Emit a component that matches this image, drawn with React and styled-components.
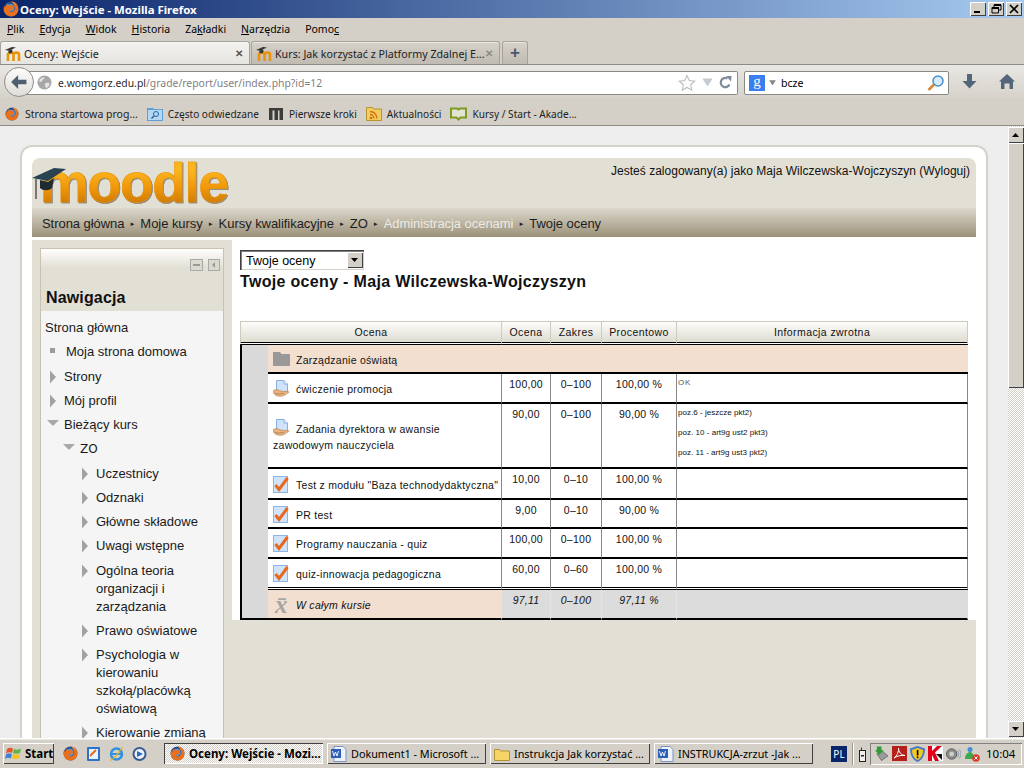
import React from "react";
import styled, { createGlobalStyle } from "styled-components";

const Global = createGlobalStyle`
  html, body { margin: 0; padding: 0; background: #d4d0c8; }
  * { box-sizing: border-box; }
`;
const ui = `"Noto Sans", "DejaVu Sans", sans-serif`;
const web = `"Liberation Sans", Arial, sans-serif`;

const Root = styled.div`
  width: 1024px; height: 768px; overflow: hidden; display: flex; flex-direction: column;
  background: #d4d0c8; font-family: ${ui}; color: #000;
`;
const TitleBar = styled.div`
  height: 18px; flex: none; display: flex; align-items: center; padding: 0 2px 0 3px;
  background: linear-gradient(90deg, #0a246a 0%, #a6caf0 100%);
  color: #fff; font: bold 11.4px ${ui}; gap: 1px;
`;
const TitleText = styled.span`flex: 1;`;
const WinBtns = styled.div`display: flex; gap: 2px;`;
const WinBtn = styled.div`
  width: 16px; height: 14px; background: #d4d0c8; display: flex; align-items: center; justify-content: center;
  box-shadow: inset 1px 1px 0 #fff, inset -1px -1px 0 #404040;
`;
const MenuBar = styled.div`
  height: 22px; flex: none; display: flex; align-items: center; gap: 15px; padding-left: 7px; font-size: 10.5px;
`;
const MenuItem = styled.span`u { text-decoration: underline; }`;
const TabStrip = styled.div`
  height: 24px; flex: none; display: flex; align-items: flex-end; gap: 1px; padding-top: 1px; font-size: 10.7px;
`;
const Tab = styled.div`
  width: ${p => p.$w}px; height: 23px; display: flex; align-items: center; padding: 1px 6px 0 4px; gap: 2px;
  border: 1px solid #a5a29b; border-bottom: 0; border-radius: 3px 3px 0 0;
  background: ${p => p.$active ? "linear-gradient(#f3f2ef, #e6e4df)" : "linear-gradient(#d6d2ca, #bfbbb2)"};
  box-shadow: inset 0 1px 0 rgba(255,255,255,.5);
`;
const TabLabel = styled.span`flex: 1; min-width: 0; white-space: nowrap; color: #222;`;
const TabClose = styled.span`font: bold 10px ${web}; color: ${p => p.$dim ? "#8c8a84" : "#55534e"};`;
const NewTab = styled(Tab)`justify-content: center; padding: 0; font: bold 17px ${web}; color: #4a5a6c; margin-left: 1px;`;
const NavBar = styled.div`
  height: 34px; flex: none; border-top: 1px solid #8d8b85; display: flex; align-items: center;
  background: linear-gradient(#e9e7e3, #d6d2cb); padding: 0 0 0 4px; font-size: 11px;
`;
const BackBtn = styled.div`
  width: 30px; height: 30px; border-radius: 50%; flex: none; z-index: 1; margin-top: 1px;
  background: linear-gradient(#fcfcfb, #dfddd9); border: 1px solid #8f8e8a;
  display: flex; align-items: center; justify-content: center;
`;
const UrlBox = styled.div`
  width: 712px; height: 24px; margin-left: -8px; margin-top: 2px; background: #fff; border: 1px solid #8a8984; border-left: 0;
  border-radius: 0 2px 2px 0; display: flex; align-items: center; padding: 0 5px 0 11px; gap: 6px;
`;
const UrlText = styled.span`flex: 1; color: #808080; font-size: 10.4px; b { font-weight: normal; color: #2c2c2c; }`;
const SearchBox = styled.div`
  width: 205px; height: 24px; margin-left: 6px; margin-top: 2px; background: #fff; border: 1px solid #8a8984; border-radius: 2px;
  display: flex; align-items: center; padding: 0 3px 0 4px; gap: 4px;
`;
const GoogleBadge = styled.span`
  width: 16px; height: 16px; background: #3a7eef; color: #fff; font: 15px/13px "Liberation Serif", serif; text-align: center;
`;
const SearchText = styled.span`flex: 1; font-size: 10.6px; margin-left: 1px;`;
const ToolIcon = styled.span`display: flex; margin-left: ${p => p.$ml}px;`;
const BookmarkBar = styled.div`
  height: 28px; flex: none; display: flex; align-items: center; gap: 9px; padding: 4px 0 0 5px; font-size: 10.1px;
  border-bottom: 1px solid #8d8b85; color: #222;
`;
const Bookmark = styled.span`
  display: flex; align-items: center; gap: ${p => p.$gap || 5}px; white-space: nowrap; font-size: ${p => p.$fs ? `${p.$fs}px` : "inherit"};
`;

const PageRow = styled.div`flex: 1; min-height: 0; display: flex; overflow: hidden;`;
const Viewport = styled.div`flex: 1; min-width: 0; background: #eeeeee; overflow: hidden; padding: 19px 20px 0;`;
const Card = styled.div`
  width: 968px; height: 640px; background: #fff; border: 2px solid #d5d2c8; border-bottom: 0; border-radius: 12px 12px 0 0;
  padding: 11px 10px 0; font-family: ${web};
`;
const Header = styled.div`
  height: 50px; background: #e2dfd4; border-radius: 8px 8px 0 0; display: flex; justify-content: space-between;
`;
const LogoWrap = styled.div`position: relative; padding: 0 0 0 8px; width: 210px; height: 50px;`;
const LogoText = styled.span`
  display: block; font: bold 55px/50px ${web}; letter-spacing: -1.3px;
  background: linear-gradient(#fbb61e 25%, #f0960a 60%, #c47404 100%);
  -webkit-background-clip: text; background-clip: text; color: transparent;
  -webkit-text-stroke: 0.5px #e8920c;
  filter: drop-shadow(1px 1px 0 #8e8a7c);
`;
const Cap = styled.svg`position: absolute; left: 0; top: 9px;`;
const LoginInfo = styled.div`font-size: 12px; letter-spacing: 0.02px; padding: 6px 6px 0 0; color: #111;`;
const Crumbs = styled.div`
  height: 29px; margin-bottom: 3px; background: linear-gradient(#dcd8cb, #9c917a); display: flex; align-items: center;
  padding: 2px 0 0 10px; gap: 5px; font-size: 13px; letter-spacing: -0.05px; color: #222;
`;
const Crumb = styled.span`color: ${p => p.$light ? "#ecebe4" : "#1d1d1d"};`;
const Sep = styled.span`font-size: 6px; color: #222;`;
const Main = styled.div`display: flex; background: #e2dfd4; align-items: flex-start; height: 500px;`;
const SideCol = styled.div`width: 200px; flex: none; padding: 8px 8px 0;`;
const Block = styled.div`border: 1px solid #c9c2b0; background: #f5f5f5;`;
const BlockHead = styled.div`
  height: 62px; background: linear-gradient(#fff, #e2dfd4 30%); position: relative; padding: 39px 0 0 5px;
  font: bold 16px/20px ${web}; letter-spacing: 0.15px; color: #111;
`;
const BlockTools = styled.div`position: absolute; top: 10px; right: 3px; display: flex; gap: 5px;`;
const BlockBody = styled.div`padding: 8px 0 0 0; font-size: 13px; letter-spacing: 0; color: #1a1a1a;`;
const Item = styled.div`
  display: flex; line-height: 18px; margin-bottom: 6.27px; padding-left: ${p => 4 + Math.max(p.$depth - 1, 0) * 16}px;
`;
const ItemText = styled.span`
  flex: 1; padding-right: 12px; margin-left: ${p => p.$shift || 0}px;
  font-family: ${p => p.$serif ? `"DejaVu Sans", sans-serif` : "inherit"}; font-size: ${p => p.$serif ? "12px" : "inherit"};
`;
const Content = styled.div`width: 744px; flex: none; height: 380px; background: #fff; padding: 10px 8px 0;`;
const FakeSelect = styled.div`
  width: 124px; height: 20px; background: #fff; display: flex; align-items: center; padding: 1px 0 0 6px;
  box-shadow: inset 1px 1px 0 #404040, inset 2px 2px 0 #808080, inset -1px -1px 0 #d4d0c8; font-size: 12.5px;
`;
const SelectValue = styled.span`flex: 1;`;
const SelectArrow = styled.span`
  width: 16px; height: 16px; margin: -1px 1px 0 0; background: #d4d0c8; display: flex; align-items: center; justify-content: center;
  box-shadow: inset 1px 1px 0 #fff, inset -1px -1px 0 #404040;
`;
const Title = styled.h2`margin: 4px 0 31px; font: bold 16px/16px ${web}; letter-spacing: 0.32px; color: #111;`;
const Table = styled.table`
  width: 728px; table-layout: fixed; border-collapse: separate; border-spacing: 0; font-size: 10.5px; letter-spacing: 0.42px; color: #111;
`;
const Th = styled.th`
  height: 24px; font-weight: normal; text-align: center; padding: 0; background: linear-gradient(#fdfdfc, #dedbd0);
  border-top: 1px solid #cfcabd; border-right: 1px solid #cfcabd; border-bottom: 3px double #000;
  &:first-child { border-left: 1px solid #cfcabd; }
`;
const Leader = styled.td`background: #d9d9d9; border-left: 2px solid #000; border-bottom: 2px solid #000; padding: 0;`;
const Name = styled.td`
  height: ${p => p.$h}px; background: ${p => p.$tint ? "#f2dfd0" : "#fff"}; vertical-align: middle; line-height: 16px;
  padding: 3px 0 0 5px; letter-spacing: 0.27px; border-bottom: ${p => p.$double ? "3px double #000" : "2px solid #000"};
  border-right: ${p => p.$span ? "0" : `1px solid ${p.$italic ? "#f2dfd0" : "#888"}`}; font-style: ${p => p.$italic ? "italic" : "normal"};
`;
const Val = styled.td`
  vertical-align: top; text-align: center; padding: 4px 0 0; background: ${p => p.$total ? "#dcdcdc" : "#fff"};
  border-bottom: ${p => p.$double ? "3px double #000" : "2px solid #000"}; letter-spacing: 0.25px;
  border-right: 1px solid ${p => p.$total ? "#e4e4e4" : "#888"}; font-style: ${p => p.$total ? "italic" : "normal"};
  line-height: 13px;
`;
const Feedback = styled.td`
  vertical-align: top; padding: 3px 0 0 1px; background: ${p => p.$total ? "#dcdcdc" : "#fff"};
  border-bottom: ${p => p.$double ? "3px double #000" : "2px solid #000"}; border-right: 1px solid ${p => p.$total ? "#dcdcdc" : "#888"};
  font-size: 8px; letter-spacing: 0.03px; line-height: 12px;
`;
const FeedLine = styled.div`height: 20px; ${p => p.$note && "letter-spacing: 0.7px; color: #555;"}`;
const LabelIcon = styled.span`
  display: inline-flex; align-items: center; width: 23px; height: 10px; margin-bottom: 4px; vertical-align: middle;
`;
const Xbar = styled(LabelIcon)`
  font: italic bold 25px/10px "Liberation Serif", serif; color: #a5a5a5; padding-left: 2px; letter-spacing: 0;
`;

const Scrollbar = styled.div`
  width: 16px; flex: none; display: flex; flex-direction: column; padding-top: 1px; padding-bottom: 1px;
  background: repeating-conic-gradient(#d4d0c8 0 25%, #fff 0 50%) 0 0 / 2px 2px;
`;
const ScrollBtn = styled.div`
  height: 16px; background: #d4d0c8; display: flex; align-items: center; justify-content: center; flex: none;
  box-shadow: inset 1px 1px 0 #fff, inset -1px -1px 0 #404040;
`;
const ScrollThumb = styled(ScrollBtn)`height: 245px;`;
const ScrollGap = styled.div`flex: 1;`;

const Taskbar = styled.div`
  height: 30px; flex: none; background: #d4d0c8; border-top: 1px solid #fff; box-shadow: inset 0 1px 0 #ece9e2;
  display: flex; align-items: center; padding: 0 2px 0 3px; font-size: 10.8px;
`;
const StartBtn = styled.div`
  width: 51px; height: 21px; display: flex; align-items: center; gap: 2px; padding-left: 2px; font: bold 11.5px ${ui};
  box-shadow: inset 1px 1px 0 #fff, inset -1px -1px 0 #404040;
`;
const Quick = styled.div`display: flex; align-items: center; margin: 0 17px 0 9px; width: 84px; justify-content: space-between;`;
const TaskBtn = styled.div`
  width: ${p => p.$w || 159}px; height: 21px; margin-right: 4px; display: flex; align-items: center; gap: 4px; padding-left: ${p => p.$active ? 6 : 4}px; white-space: nowrap; overflow: hidden;
  box-shadow: ${p => p.$active ? "inset 1px 1px 0 #404040, inset -1px -1px 0 #fff" : "inset 1px 1px 0 #fff, inset -1px -1px 0 #404040"};
  ${p => p.$active && "background: repeating-conic-gradient(#d4d0c8 0 25%, #fff 0 50%) 0 0 / 2px 2px; font-weight: bold; font-size: 11.5px;"}
`;
const Lang = styled.span`
  margin-left: 14px; width: 16px; height: 16px; background: #0a246a; color: #fff; font-size: 10px; line-height: 16px; text-align: center; flex: none;
`;
const TrayDivider = styled.span`width: 2px; height: 22px; margin: 0 5px 0 5px; background: #fff; border-left: 1px solid #9a9890; flex: none;`;
const Tray = styled.div`
  margin-left: auto; width: 152px; height: 22px; display: flex; align-items: center; gap: 3px; padding-left: 4px;
  box-shadow: inset 1px 1px 0 #808080, inset -1px -1px 0 #fff;
`;
const Clock = styled.span`margin-left: 3px; font-size: 11.5px;`;

const Firefox = ({ s = 16 }) => (
  <svg width={s} height={s} viewBox="0 0 16 16" style={{ flex: "none" }}>
    <circle cx="8" cy="8" r="7.4" fill="#274f96" />
    <circle cx="7.5" cy="6.8" r="3.8" fill="#5b9bd8" />
    <path d="M8.6.6C13 .9 15.6 4.4 15.4 8.4c-.2 4.2-3.6 7.2-7.6 7-3.9-.2-7-3.2-7.2-7.2 0-1.3.2-2.4.8-3.5.2 1 .6 1.6 1.1 2C2.3 4.7 3.6 3 5.5 2.3 4.8 3.2 4.7 4 4.9 4.6c1.4-1 3.9-.9 5 .4.8 1 .8 2.7-.4 3.7-1.4 1.1-3.5.8-4.3-.3.5 2 2.8 3.2 4.8 2.2 1.5-.8 2.3-2.5 1.8-4.5C11.3 4 10.1 2 8.6.6z" fill="#e8701c" />
    <path d="M8.6.6c2 .5 4.2 2.3 4.5 4.4-.9-1.6-2.5-3-4.5-4.4z" fill="#f8b233" />
  </svg>
);
const MoodleFav = () => (
  <svg width="17" height="16" viewBox="0 0 17 16" style={{ flex: "none" }}>
    <path d="M3 15V7M8.5 15V8.5C8.5 6 3.5 6 3.3 8.5M14 15V8.5C14 6 8.8 6 8.7 8.5" fill="none" stroke="#e8930c" strokeWidth="2.6" />
    <path d="M0 4 7 1l4 .5-7 3.2z" fill="#333" />
    <path d="M3.5 4.5V7l2.500.5L7.500 6l-.3-2.500z" fill="#333" />
  </svg>
);
const Globe = () => (
  <svg width="15" height="15" viewBox="0 0 15 15" style={{ flex: "none" }}>
    <circle cx="7.5" cy="7.5" r="7" fill="#a8a8a8" />
    <path d="M3 4c2-1 3-2 4-2s0 2-1 2.5S5 7 3.5 7 2 5 3 4zm6 4c2-.5 3.5 0 3.5 1s-2 4-3 4-1-2-1.5-3S8 8.5 9 8z" fill="#e4e4e4" />
  </svg>
);
const Star = () => (
  <svg width="18" height="18" viewBox="0 0 18 18"><path d="M9 1.5l2.3 5 5.4.6-4 3.7 1.1 5.4L9 13.5l-4.800 2.700 1.100-5.400-4-3.700 5.400-.6z" fill="#fbfbfb" stroke="#bdbdbd" strokeWidth="1.100" /></svg>
);
const DropTri = ({ w = 11, c = "#c6cbd2" }) => <svg width={w} height={w * 0.8} viewBox="0 0 11 9"><path d="M1 1h9L5.5 8z" fill={c} stroke={c} /></svg>;
const Reload = () => (
  <svg width="13" height="13" viewBox="0 0 13 13"><path d="M10.5 8.5A4.6 4.6 0 1 1 8.5 2.500" fill="none" stroke="#7e8b9a" strokeWidth="2.200" /><path d="M7 0l5.500 0-.5 5.500z" fill="#7e8b9a" /></svg>
);
const Magnifier = () => (
  <svg width="18" height="18" viewBox="0 0 18 18"><path d="M7 10.5 1.5 16" stroke="#d98a38" strokeWidth="2.6" /><circle cx="11" cy="7" r="5" fill="#d4ecfb" stroke="#4d8fc6" strokeWidth="1.5" /></svg>
);
const Down = () => <svg width="15" height="15" viewBox="0 0 15 15"><path d="M5 0h5v7h4.5L7.5 14.500.5 7H5z" fill="#546679" /></svg>;
const Home = () => <svg width="16" height="15" viewBox="0 0 16 15"><path d="M8 0 16 7.5h-2V15h-3.5V9.5h-5V15H2V7.500H0z" fill="#546679" /></svg>;
const Back = () => <svg width="16" height="14" viewBox="0 0 18 16"><path d="M8 0 0 8l8 8V10.5h9.5v-5H8z" fill="#4f5f72" /></svg>;
const FolderSearch = () => (
  <svg width="16" height="15" viewBox="0 0 16 15"><path d="M0 2h6l1 1h9v12H0z" fill="#5d9fd8" /><rect x="1" y="4" width="14" height="10" fill="#b6d7f2" /><circle cx="9" cy="8" r="2.5" fill="none" stroke="#2565a5" /><path d="M7 10 4.5 12.5" stroke="#2565a5" strokeWidth="1.4" /></svg>
);
const Rss = () => (
  <svg width="16" height="15" viewBox="0 0 16 15"><path d="M.5 1.5h6l1 1.5h8v11.500H.5z" fill="#f0cd5c" stroke="#b8932e" /><circle cx="5" cy="12" r="1.3" fill="#d96a10" /><path d="M4 8.5a4 4 0 0 1 4 4M4 5.500a7 7 0 0 1 7 7" fill="none" stroke="#d96a10" strokeWidth="1.4" /></svg>
);
const BookIcon = () => (
  <svg width="17" height="14" viewBox="0 0 17 14"><path d="M1 1.5h6l1.5 1 1.5-1h6v9h-5.500l-2 2-2-2H1z" fill="#e4e4d2" stroke="#7d9a22" strokeWidth="2" /></svg>
);
const Mm = () => (
  <svg width="16" height="13" viewBox="0 0 16 13"><path d="M1 13V1h14v12h-3.500V3.500H10V13H6.500V3.500H4.500V13z" fill="#3c3c3c" /></svg>
);
const Folder = () => <svg width="17" height="14" viewBox="0 0 17 14" style={{ flex: "none" }}><path d="M0 0h7l1.500 2H17v12H0z" fill="#999" /></svg>;
const Assign = () => (
  <svg width="17" height="18" viewBox="0 0 17 18" style={{ flex: "none" }}>
    <path d="M3.5.5H11l3.500 3.500v9h-11z" fill="#cfe3fa" stroke="#86aee4" />
    <path d="M11 .5V4h3.500" fill="#f4f9ff" stroke="#86aee4" />
    <path d="M.5 10.500c2-1.200 4-1.200 6 0l3 .8 6 .3c1 .6 0 1.400-1 1.500-2 2.200-5 3.400-8 3.200-3-.2-5-1.500-6-3.300z" fill="#ecb27c" stroke="#b08252" strokeWidth=".6" />
    <path d="M2 13.500c3 1 6 .6 9-.3" fill="none" stroke="#9c7a52" strokeWidth=".8" />
  </svg>
);
const Quiz = () => (
  <svg width="16" height="17" viewBox="0 0 16 17" style={{ flex: "none" }}>
    <rect x=".5" y=".5" width="14" height="16" fill="#cfe4fa" stroke="#8db6e8" />
    <path d="M2.5 9 6 13.500 14.500 2" fill="none" stroke="#e8681e" strokeWidth="3" />
  </svg>
);
const Flag = () => (
  <svg width="18" height="16" viewBox="0 0 18 16" style={{ flex: "none" }}>
    <path d="M2 3c2-1.500 4-1.500 6-.5L7 7C5 6 3 6 1 7.500z" fill="#e8542a" />
    <path d="M9 3c2 1 4 1 7-.5L15 7c-2.500 1-5 1-7 0z" fill="#5cb545" />
    <path d="M1 8.500C3 7 5 7 6.800 8L6 12.500C4 11.500 2 11.500 0 13z" fill="#3f7fdd" />
    <path d="M8 8c2 1 4.500 1 7-.2l-1 4.500c-2.500 1-5 1-7 0z" fill="#f5c21b" />
  </svg>
);
const IconDoc = () => (
  <svg width="16" height="16" viewBox="0 0 16 16" style={{ flex: "none" }}>
    <path d="M3 .5h9l3 3V15.500H3z" fill="#eef3fb" stroke="#7c94c4" />
    <rect x="0" y="3" width="10" height="9" fill="#2c5fb8" />
    <path d="M1.500 5 3 10l1.500-4L6 10l1.500-5" fill="none" stroke="#fff" strokeWidth=".9" />
  </svg>
);
const FolderYellow = () => <svg width="16" height="14" viewBox="0 0 16 14" style={{ flex: "none" }}><path d="M.5 2.500h5l1 1.500h9v9.500H.5z" fill="#f6d468" stroke="#b3922f" /></svg>;
const Outlook = () => <svg width="15" height="16" viewBox="0 0 15 16"><rect x="1" y="1" width="13" height="14" rx="1" fill="#2f72c9" /><rect x="3" y="3" width="9" height="10" fill="#eaf3fc" /><path d="M4 10l6-6" stroke="#e56a1a" strokeWidth="2" /></svg>;
const IE = () => <svg width="15" height="16" viewBox="0 0 15 16"><circle cx="7.500" cy="8" r="5.500" fill="none" stroke="#2f8fe0" strokeWidth="2.500" /><path d="M2 8h11" stroke="#2f8fe0" strokeWidth="2" /><path d="M1 14C3 15 10 7 13.500 1" fill="none" stroke="#e0b12a" strokeWidth="1.200" /></svg>;
const Media = () => <svg width="15" height="16" viewBox="0 0 15 16"><circle cx="7.500" cy="8" r="7" fill="#3a5a92" /><circle cx="7.500" cy="8" r="5" fill="#eef3fa" /><path d="M5 5l6 3-6 3z" fill="#2d67c4" /></svg>;
const Battery = () => <svg width="8" height="16" viewBox="0 0 8 16" style={{ flex: "none", marginRight: 3 }}><path d="M2.500 1.500v3" stroke="#333" /><rect x=".5" y="4.500" width="6" height="11" fill="#eee" stroke="#222" /><rect x="2" y="9" width="3" height="1.500" fill="#222" /></svg>;
const Tray1 = () => <svg width="15" height="16" viewBox="0 0 16 16"><path d="M3 8l6-3 6 5-7 5z" fill="#9a9a9a" stroke="#555" strokeWidth=".7" /><path d="M3 0h5v4h2.500L5.500 9 1 4h2z" fill="#2f9c3a" /></svg>;
const Adobe = () => <svg width="15" height="15" viewBox="0 0 15 15"><rect width="15" height="15" fill="#b5201c" /><path d="M2 12c3-2 5-7 4.500-10C6.500 6 9 9 13 9.500 9 9 5 10 2 12z" fill="none" stroke="#fff" /></svg>;
const Shield = () => <svg width="15" height="16" viewBox="0 0 15 16"><path d="M7.500 0 15 2.500c0 6-2 11-7.500 13.500C2 13.500 0 8.500 0 2.500z" fill="#4c78c8" /><path d="M7.500 2 13 4c0 4-1.500 8-5.500 10C3.500 12 2 8 2 4z" fill="#f3c81f" /><rect x="6.800" y="4" width="1.600" height="5.500" /><rect x="6.800" y="10.500" width="1.600" height="1.600" /></svg>;
const Kasp = () => <svg width="15" height="15" viewBox="0 0 15 15"><rect width="15" height="15" fill="#fff" /><path d="M0 0h4v5L9 0h5L7 6.500 11 15H7L4 9v6H0z" fill="#e3001b" /><path d="M8 8l6 0v6z" fill="#111" /></svg>;
const Speaker = () => <svg width="15" height="16" viewBox="0 0 16 16"><circle cx="6" cy="8" r="5.500" fill="#8e8e8e" stroke="#555" /><circle cx="6" cy="8" r="2.500" fill="#d0d0d0" /><path d="M12 4c2 2 2 6 0 8M14 3c2.500 3 2.500 7 0 10" stroke="#8f9bb0" fill="none" /></svg>;
const Users = () => <svg width="16" height="16" viewBox="0 0 16 16"><circle cx="6" cy="3.500" r="2.500" fill="#3e8fd8" /><path d="M1 13c0-5 3-7 5-7s4 2 4 7z" fill="#3ea84e" /><circle cx="12" cy="12" r="3.800" fill="#d93a26" /><path d="M10.500 10.500l3 3m0-3-3 3" stroke="#fff" /></svg>;

const Arrow = ({ type }) => (
  <svg width="19" height="18" viewBox="0 0 19 18" style={{ flex: "none" }}>
    {type === "right" && <path d="M5 2.500 11 9 5 15.500z" fill="#a2a2a2" />}
    {type === "down" && <path d="M2 4h12L8 10z" fill="#a8a8a8" />}
    {type === "bullet" && <rect x="5" y="5" width="5" height="5" fill="#9c9c9c" />}
  </svg>
);

const nav = [
  { t: "Strona główna", d: 0 },
  { t: "Moja strona domowa", d: 1, m: "bullet", shift: 2 },
  { t: "Strony", d: 1, m: "right" },
  { t: "Mój profil", d: 1, m: "right" },
  { t: "Bieżący kurs", d: 1, m: "down" },
  { t: "ZO", d: 2, m: "down", serif: true },
  { t: "Uczestnicy", d: 3, m: "right" },
  { t: "Odznaki", d: 3, m: "right" },
  { t: "Główne składowe", d: 3, m: "right" },
  { t: "Uwagi wstępne", d: 3, m: "right" },
  { t: "Ogólna teoria organizacji i zarządzania", d: 3, m: "right" },
  { t: "Prawo oświatowe", d: 3, m: "right" },
  { t: "Psychologia w kierowaniu szkołą/placówką oświatową", d: 3, m: "right" },
  { t: "Kierowanie zmianą", d: 3, m: "right" },
];

const rows = [
  { h: 30, icon: <Assign />, name: "ćwiczenie promocja", v: ["100,00", "0–100", "100,00 %"], fb: ["OK"], note: true },
  { h: 65, icon: <Assign />, name: "Zadania dyrektora w awansie zawodowym nauczyciela", v: ["90,00", "0–100", "90,00 %"], fb: ["poz.6 - jeszcze pkt2)", "poz. 10 - art9g ust2 pkt3)", "poz. 11 - art9g ust3 pkt2)"] },
  { h: 31, icon: <Quiz />, name: "Test z modułu \"Baza technodydaktyczna\"", v: ["10,00", "0–10", "100,00 %"] },
  { h: 29, icon: <Quiz />, name: "PR test", v: ["9,00", "0–10", "90,00 %"] },
  { h: 30, icon: <Quiz />, name: "Programy nauczania - quiz", v: ["100,00", "0–100", "100,00 %"] },
  { h: 31, icon: <Quiz />, name: "quiz-innowacja pedagogiczna", v: ["60,00", "0–60", "100,00 %"], double: true },
];

export default function App() {
  return (
    <Root>
      <Global />
      <TitleBar>
        <Firefox />
        <TitleText>Oceny: Wejście - Mozilla Firefox</TitleText>
        <WinBtns>
          <WinBtn><svg width="10" height="10"><rect x="1" y="7" width="6" height="2" /></svg></WinBtn>
          <WinBtn><svg width="11" height="10"><path d="M3 3V1h7v5H8M1 3.500h6.500V9H1z" fill="none" stroke="#000" /><rect x="3" y="0" width="7" height="2" /><rect x="1" y="3" width="7" height="2" /></svg></WinBtn>
          <WinBtn><svg width="10" height="10"><path d="M1 1l8 8M9 1l-8 8" stroke="#000" strokeWidth="1.700" /></svg></WinBtn>
        </WinBtns>
      </TitleBar>
      <MenuBar>
        <MenuItem><u>P</u>lik</MenuItem>
        <MenuItem><u>E</u>dycja</MenuItem>
        <MenuItem><u>W</u>idok</MenuItem>
        <MenuItem><u>H</u>istoria</MenuItem>
        <MenuItem>Za<u>k</u>ładki</MenuItem>
        <MenuItem><u>N</u>arzędzia</MenuItem>
        <MenuItem>Pomo<u>c</u></MenuItem>
      </MenuBar>
      <TabStrip>
        <Tab $w={250} $active><MoodleFav /><TabLabel>Oceny: Wejście</TabLabel><TabClose>✕</TabClose></Tab>
        <Tab $w={249}><MoodleFav /><TabLabel>Kurs: Jak korzystać z Platformy Zdalnej E...</TabLabel><TabClose $dim>✕</TabClose></Tab>
        <NewTab $w={26}>+</NewTab>
      </TabStrip>
      <NavBar>
        <BackBtn><Back /></BackBtn>
        <UrlBox>
          <Globe />
          <UrlText><b>e.womgorz.edu.pl</b>/grade/report/user/index.php?id=12</UrlText>
          <Star /><DropTri /><Reload />
        </UrlBox>
        <SearchBox>
          <GoogleBadge>g</GoogleBadge><DropTri w={7} c="#888" />
          <SearchText>bcze</SearchText>
          <Magnifier />
        </SearchBox>
        <ToolIcon $ml={13}><Down /></ToolIcon>
        <ToolIcon $ml={22}><Home /></ToolIcon>
      </NavBar>
      <BookmarkBar>
        <Bookmark $gap={6} $fs={10.5}><Firefox s={14} />Strona startowa prog...</Bookmark>
        <Bookmark><FolderSearch />Często odwiedzane</Bookmark>
        <Bookmark><Mm />Pierwsze kroki</Bookmark>
        <Bookmark><Rss />Aktualności</Bookmark>
        <Bookmark><BookIcon />Kursy / Start - Akade...</Bookmark>
      </BookmarkBar>
      <PageRow>
        <Viewport>
          <Card>
            <Header>
              <LogoWrap>
                <LogoText>moodle</LogoText>
                <Cap width="34" height="36" viewBox="0 0 34 36">
                  <path d="M0 11 22 1l12 1L16 14z" fill="#2a4352" />
                  <path d="M8 13v8c3 3 9 3 12 0l2-10-6 4z" fill="#1f2b33" />
                  <path d="M4 12v20" stroke="#333" strokeWidth="1.200" />
                </Cap>
              </LogoWrap>
              <LoginInfo>Jesteś zalogowany(a) jako Maja Wilczewska-Wojczyszyn (Wyloguj)</LoginInfo>
            </Header>
            <Crumbs>
              <Crumb>Strona główna</Crumb><Sep>►</Sep>
              <Crumb>Moje kursy</Crumb><Sep>►</Sep>
              <Crumb>Kursy kwalifikacyjne</Crumb><Sep>►</Sep>
              <Crumb>ZO</Crumb><Sep>►</Sep>
              <Crumb $light>Administracja ocenami</Crumb><Sep>►</Sep>
              <Crumb>Twoje oceny</Crumb>
            </Crumbs>
            <Main>
              <SideCol>
                <Block>
                  <BlockHead>
                    Nawigacja
                    <BlockTools>
                      <svg width="13" height="12"><rect x=".5" y=".5" width="12" height="11" fill="#dcd9cf" stroke="#a9a9a9" /><rect x="3" y="5" width="7" height="2" fill="#999" /></svg>
                      <svg width="12" height="12"><rect x=".5" y=".5" width="11" height="11" fill="#dcd9cf" stroke="#a9a9a9" /><path d="M7 3 4 6l3 3z" fill="#999" /></svg>
                    </BlockTools>
                  </BlockHead>
                  <BlockBody>
                    {nav.map(n => (
                      <Item key={n.t} $depth={n.d}>
                        {n.m && <Arrow type={n.m} />}
                        <ItemText $shift={n.shift} $serif={n.serif}>{n.t}</ItemText>
                      </Item>
                    ))}
                  </BlockBody>
                </Block>
              </SideCol>
              <Content>
                <FakeSelect>
                  <SelectValue>Twoje oceny</SelectValue>
                  <SelectArrow><svg width="8" height="5"><path d="M0 0h7L3.500 4z" /></svg></SelectArrow>
                </FakeSelect>
                <Title>Twoje oceny - Maja Wilczewska-Wojczyszyn</Title>
                <Table>
                  <colgroup>
                    <col style={{ width: 28 }} /><col style={{ width: 234 }} /><col style={{ width: 49 }} />
                    <col style={{ width: 51 }} /><col style={{ width: 75 }} /><col style={{ width: 291 }} />
                  </colgroup>
                  <thead>
                    <tr>
                      <Th colSpan={2}>Ocena</Th><Th>Ocena</Th><Th>Zakres</Th><Th>Procentowo</Th><Th>Informacja zwrotna</Th>
                    </tr>
                  </thead>
                  <tbody>
                    <tr>
                      <Leader rowSpan={8} />
                      <Name colSpan={5} $h={29} $tint $span><LabelIcon><Folder /></LabelIcon>Zarządzanie oświatą</Name>
                    </tr>
                    {rows.map(r => (
                      <tr key={r.name}>
                        <Name $h={r.h} $double={r.double}><LabelIcon>{r.icon}</LabelIcon>{r.name}</Name>
                        {r.v.map((v, i) => <Val key={i} $double={r.double}>{v}</Val>)}
                        <Feedback $double={r.double}>
                          {(r.fb || []).map(l => <FeedLine key={l} $note={r.note}>{l}</FeedLine>)}
                        </Feedback>
                      </tr>
                    ))}
                    <tr>
                      <Name $h={30} $tint $italic><Xbar>x̄</Xbar>W całym kursie</Name>
                      <Val $total>97,11</Val><Val $total>0–100</Val><Val $total>97,11 %</Val><Feedback $total />
                    </tr>
                  </tbody>
                </Table>
              </Content>
            </Main>
          </Card>
        </Viewport>
        <Scrollbar>
          <ScrollBtn><svg width="8" height="5"><path d="M3.500 0 7 4H0z" /></svg></ScrollBtn>
          <ScrollThumb />
          <ScrollGap />
          <ScrollBtn><svg width="8" height="5"><path d="M0 0h7L3.500 4z" /></svg></ScrollBtn>
        </Scrollbar>
      </PageRow>
      <Taskbar>
        <StartBtn><Flag />Start</StartBtn>
        <Quick><Firefox s={15} /><Outlook /><IE /><Media /></Quick>
        <TaskBtn $active><Firefox s={15} />Oceny: Wejście - Mozi...</TaskBtn>
        <TaskBtn><IconDoc />Dokument1 - Microsoft ...</TaskBtn>
        <TaskBtn $w={160}><FolderYellow />Instrukcja Jak korzystać ...</TaskBtn>
        <TaskBtn><IconDoc />INSTRUKCJA-zrzut -Jak ...</TaskBtn>
        <Lang>PL</Lang>
        <TrayDivider />
        <Battery />
        <Tray>
          <Tray1 /><Adobe /><Shield /><Kasp /><Speaker /><Users />
          <Clock>10:04</Clock>
        </Tray>
      </Taskbar>
    </Root>
  );
}
